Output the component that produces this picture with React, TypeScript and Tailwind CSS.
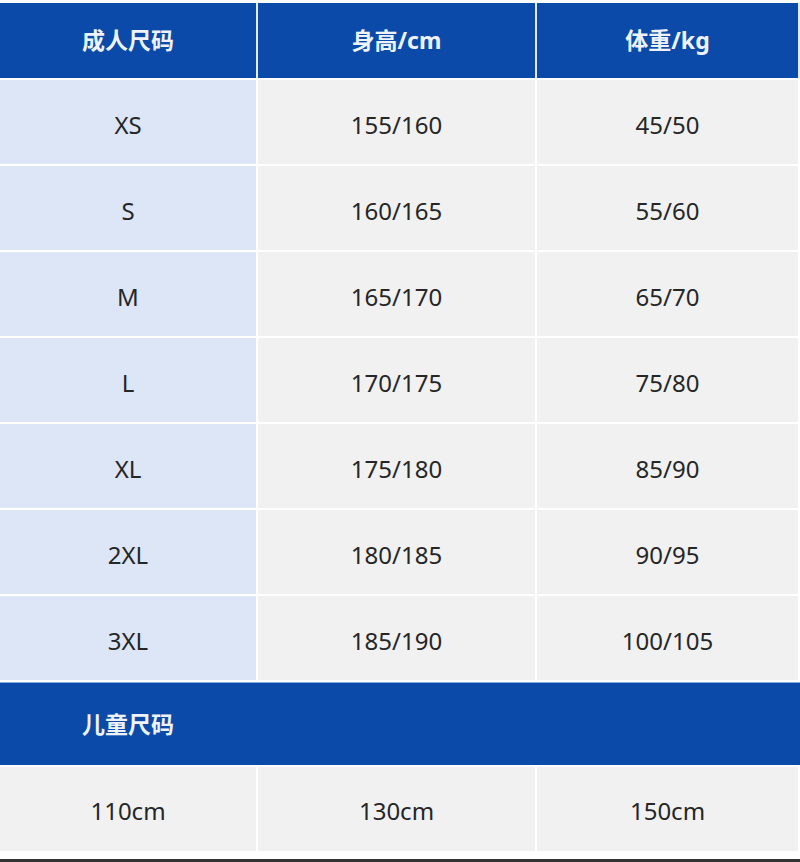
const rows = [
	["XS", "155/160", "45/50"],
	["S", "160/165", "55/60"],
	["M", "165/170", "65/70"],
	["L", "170/175", "75/80"],
	["XL", "175/180", "85/90"],
	["2XL", "180/185", "90/95"],
	["3XL", "185/190", "100/105"],
];

const font = { fontFamily: '"Noto Sans", "Noto Sans CJK SC", sans-serif' };

export default function App() {
	return (
		<div
			className="w-[800px] h-[862px] bg-white flex flex-col pt-[3px] overflow-hidden"
			style={font}
		>
			{/* adult header */}
			<div className="grid grid-cols-[256px_277px_1fr] gap-[2px] bg-[#e4ecf7] pr-[2px]">
				{["成人尺码", "身高/cm", "体重/kg"].map((h) => (
					<div
						key={h}
						className="h-[75px] bg-[#0b4aa8] flex items-center justify-center text-[#eef3fb] text-[23px] font-bold"
					>
						{h}
					</div>
				))}
			</div>

			{/* adult rows */}
			<div className="grid grid-cols-[256px_277px_1fr] gap-[2px] pt-[2px] pr-[2px] bg-white">
				{rows.map((r) =>
					r.map((c, i) => (
						<div
							key={r[0] + i}
							className={`h-[84px] pt-[6px] flex items-center justify-center text-[24px] text-[#262626] ${
								i === 0 ? "bg-[#dde6f6]" : "bg-[#f1f1f1]"
							}`}
						>
							{c}
						</div>
					)),
				)}
			</div>

			{/* kids band */}
			<div className="mt-[2px] h-[83px] bg-[#0b4aa8] grid grid-cols-[256px_1fr] border-t border-[#7fb0e6]">
				<div className="flex items-center justify-center text-[#eef3fb] text-[23px] font-bold">
					儿童尺码
				</div>
			</div>

			{/* kids row */}
			<div className="grid grid-cols-[256px_277px_1fr] gap-[2px] pt-[2px] pr-[2px] bg-white">
				{["110cm", "130cm", "150cm"].map((c) => (
					<div
						key={c}
						className="h-[84px] pt-[4px] bg-[#f1f1f1] flex items-center justify-center text-[24px] text-[#262626]"
					>
						{c}
					</div>
				))}
			</div>

			<div className="flex-1" />
			<div className="h-[3px] bg-[#333333]" />
		</div>
	);
}
